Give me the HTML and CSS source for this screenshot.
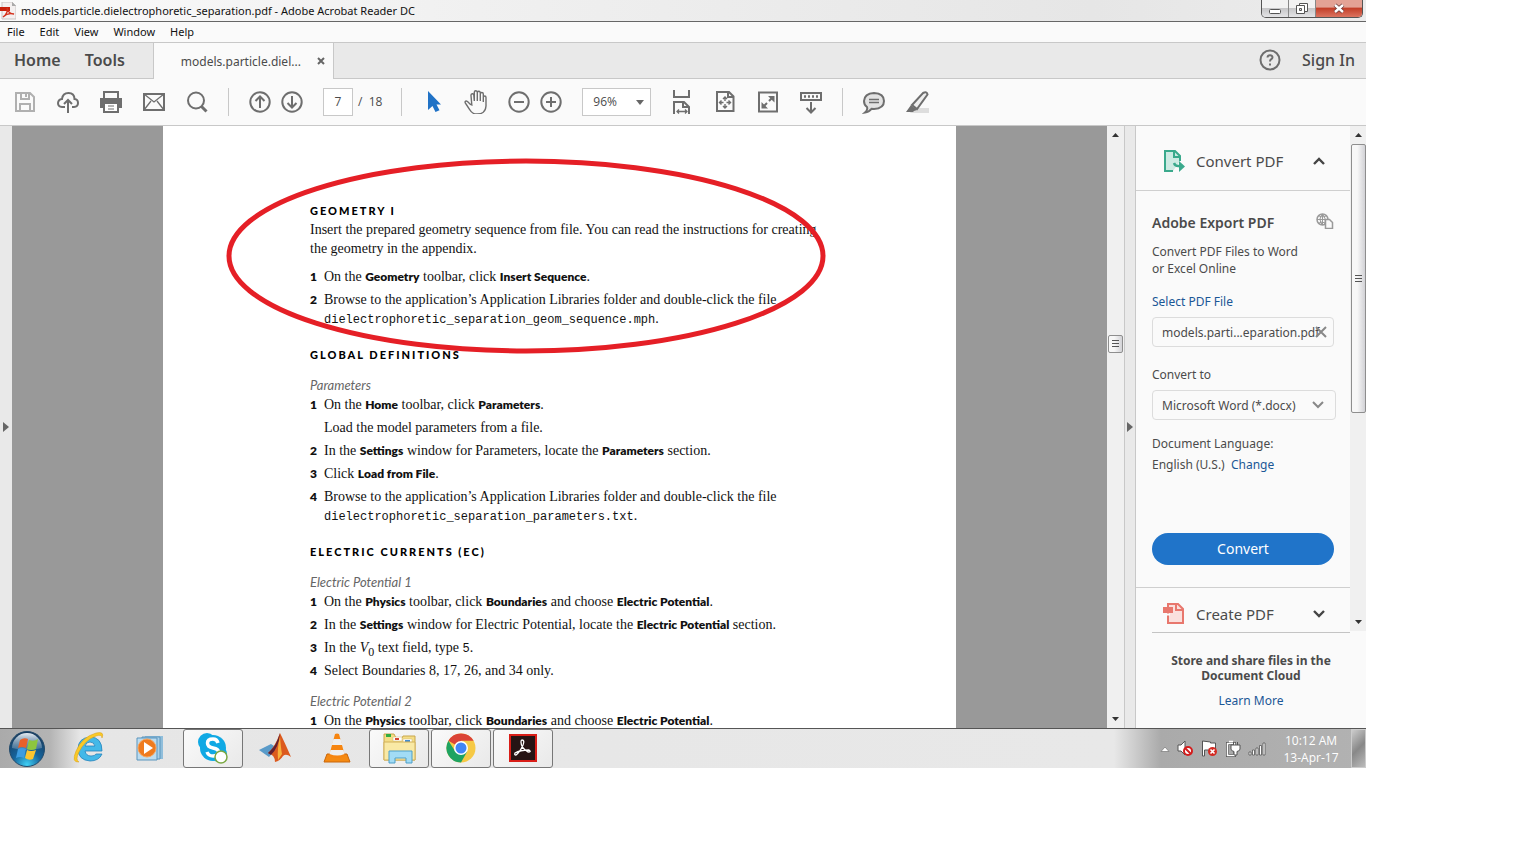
FILE: index.html
```html
<!DOCTYPE html>
<html lang="en">
<head>
<meta charset="utf-8">
<title>Adobe Acrobat Reader DC</title>
<link rel="stylesheet" href="styles.css">
</head>
<body>
<div class="desktop">
  <header class="titlebar">
    <svg class="app-icon" width="16" height="18" viewBox="0 0 16 18"><path d="M2 0h10l4 4v13H2z" fill="#f4f0f0" stroke="#c9c4c4"/><path d="M12 0v4h4z" fill="#aaa"/><path d="M0 5h10v4H0z" fill="#c9220d"/><path d="M3 15c4-3 5-6 4-9 1 4 3 6 7 6-4-1-8 0-11 3z" fill="none" stroke="#d4321e" stroke-width="1.3"/></svg>
    <span class="window-title">models.particle.dielectrophoretic_separation.pdf - Adobe Acrobat Reader DC</span>
    <div class="window-buttons">
      <button class="win-btn" aria-label="Minimize"><svg width="14" height="12"><rect x="1.500" y="6.500" width="11" height="4" rx="1" fill="#fff" stroke="#555"/></svg></button>
      <button class="win-btn" aria-label="Restore"><svg width="14" height="12"><path d="M4.500.5h8v8h-8z" fill="#fff" stroke="#555"/><path d="M1.500 2.500h8v8h-8z" fill="#fff" stroke="#555"/><path d="M4.500 5.500h2v2h-2z" fill="#ddd" stroke="#555"/></svg></button>
      <button class="win-btn win-close" aria-label="Close"><svg width="14" height="12" viewBox="0 0 14 12"><path d="M3 2l8 7M11 2L3 9" stroke="#6a3a3a" stroke-width="4"/><path d="M3 2l8 7M11 2L3 9" stroke="#fff" stroke-width="2.400"/></svg></button>
    </div>
  </header>
  <nav class="menubar">
    <button>File</button><button>Edit</button><button>View</button><button>Window</button><button>Help</button>
  </nav>
  <div class="tabbar">
    <button class="main-tab">Home</button>
    <button class="main-tab">Tools</button>
    <div class="doc-tab"><span>models.particle.diel...</span><button class="tab-close" aria-label="Close tab"><svg width="8" height="8"><path d="M1 1l6 6M7 1L1 7" stroke="#666" stroke-width="2"/></svg></button></div>
    <div class="account">
      <button class="icon-btn" aria-label="Help"><svg viewBox="0 0 24 24"><circle cx="12" cy="12" r="9.500"/><path d="M9.500 9.500q.2-2.300 2.500-2.300t2.500 2q0 1.300-1.500 2.200-1 .6-1 2"/><path d="M12 15.500v2"/></svg></button>
      <button class="sign-in">Sign In</button>
    </div>
  </div>
  <div class="toolbar">
    <button class="icon-btn dim" aria-label="Save"><svg viewBox="0 0 24 24"><path d="M3 3h14l4 4v14H3zM8 3v6h8V3M7 21v-7h10v7"/><path d="M13 4v3"/></svg></button>
    <button class="icon-btn" aria-label="Upload"><svg viewBox="0 0 24 24"><path d="M9 17H6q-4-.3-4-4 .3-3.500 4-4 .7-6 6.500-6T18.500 9q3.500.3 3.500 4 0 3.700-4 4h-2"/><path d="M12 23V10M8 14l4-4 4 4"/></svg></button>
    <button class="icon-btn" aria-label="Print"><svg viewBox="0 0 24 24"><path d="M5 8V2h14v6"/><path d="M1 8h22v10h-4v-4H5v4H1z" fill="#6e6e6e" stroke="none"/><path d="M5 13v9h14v-9z" fill="#fff"/><path d="M9 16h6M9 19h6" stroke-width="1"/></svg></button>
    <button class="icon-btn" aria-label="Email"><svg viewBox="0 0 24 24"><path d="M2 4h20v16H2z"/><path d="M2 4l10 8 10-8M2 20l7-9M22 20l-7-9" stroke-width="1.300"/></svg></button>
    <button class="icon-btn" aria-label="Search"><svg viewBox="0 0 24 24"><circle cx="11" cy="10.500" r="8"/><path d="M16.500 16.500l5 5" stroke-width="3"/></svg></button>
    <span class="divider"></span>
    <div class="pair">
      <button class="icon-btn" aria-label="Previous page"><svg viewBox="0 0 24 24"><circle cx="12" cy="12" r="9.700"/><path d="M12 18V7M7.500 11L12 6.500l4.500 4.500"/></svg></button>
      <button class="icon-btn" aria-label="Next page"><svg viewBox="0 0 24 24"><circle cx="12" cy="12" r="9.700"/><path d="M12 6v11M7.500 13l4.500 4.500 4.500-4.500"/></svg></button>
    </div>
    <div class="page-no"><input id="page" value="7" aria-label="Page"><label for="page">/&nbsp; 18</label></div>
    <span class="divider"></span>
    <button class="icon-btn" aria-label="Select"><svg viewBox="0 0 24 24"><path d="M7 1v19l4.500-4 3 6 4-1.800-3-5.700H20z" fill="#2072c6" stroke="none"/></svg></button>
    <button class="icon-btn" aria-label="Hand"><svg viewBox="0 0 24 24"><path d="M6.500 14.500L3.500 11.500Q2 10.500 1.300 11.500T2 14l4 6q2 4 7 4 8.500 0 9-8V7.500Q22 6 20.700 6T19.300 7.500V12 4Q19.300 2.500 17.800 2.500T16.300 4v7-8Q16.300 1.300 14.800 1.300T13.300 3v8V2Q13 .8 11.700.8T10.300 2.300V11L9.800 5Q9.500 3.500 8.200 3.700T7 5.500l.8 9.500z" stroke-width="1.400"/></svg></button>
    <div class="pair">
      <button class="icon-btn" aria-label="Zoom out"><svg viewBox="0 0 24 24"><circle cx="12" cy="12" r="9.700"/><path d="M7 12h10"/></svg></button>
      <button class="icon-btn" aria-label="Zoom in"><svg viewBox="0 0 24 24"><circle cx="12" cy="12" r="9.700"/><path d="M7 12h10M12 7v10"/></svg></button>
    </div>
    <div class="zoom"><select aria-label="Zoom level"><option>96%</option></select><svg width="8" height="5"><path d="M0 0h8L4 5z" fill="#666"/></svg></div>
    <button class="icon-btn" aria-label="Fit width"><svg viewBox="0 0 24 24"><path d="M4 0v7h15V0M4 24V12h10l5 5v7M13 12v5h6"/><path d="M7 21.500h10M9 19.500l-2 2 2 2M15 19.500l2 2-2 2" stroke-width="1.300"/></svg></button>
    <button class="icon-btn" aria-label="Fit page"><svg viewBox="0 0 24 24"><path d="M4 2h12l4.500 4.500V21H4zM15 2v5h5"/><path d="M12 7v4M12 14v4M7 12.500h3.500M13.500 12.500H17M10 9l2-2 2 2M10 16l2 2 2-2M8.500 10.500l-2 2 2 2M15.500 10.500l2 2-2 2" stroke-width="1.400"/></svg></button>
    <button class="icon-btn" aria-label="Full screen"><svg viewBox="0 0 24 24"><path d="M3 2.500h18v19H3z"/><path d="M13 11l4-4M7 17l4-4"/><path d="M12 6h6.500v6.500zM5.500 12v6.500H12z" fill="#6e6e6e" stroke="none"/></svg></button>
    <button class="icon-btn" aria-label="Read mode"><svg viewBox="0 0 24 24"><path d="M2 3h20v7H2z"/><path d="M5 6.500h14" stroke-dasharray="2 2" stroke-width="2.500"/><path d="M12 12v10M7.500 18l4.500 4.500 4.500-4.500"/></svg></button>
    <span class="divider"></span>
    <button class="icon-btn" aria-label="Comment"><svg viewBox="0 0 24 24"><path d="M12 3q10 .5 10 8t-10 8l-2.500-.2Q7 22 3 22.500 6 20 5 17q-3-2-3-6 .5-7.500 10-8z" fill="#e3e3e3"/><path d="M7 9.500h10M7 12.500h10" stroke-width="1.300"/></svg></button>
    <button class="icon-btn" aria-label="Highlight"><svg viewBox="0 0 24 24"><path d="M8 18h16v5H5z" fill="#ddd" stroke="none"/><path d="M7 15L18 3q4-2 4.500 1.500L12 19z" fill="#eee"/><path d="M6 15l6 5-3 1-1 1H1z" fill="#6e6e6e" stroke="none"/></svg></button>
  </div>

  <main class="workspace">
    <button class="rail rail-left" aria-label="Show navigation"><svg width="6" height="10"><path d="M0 0l6 5-6 5z" fill="#666"/></svg></button>
    <section class="viewer">
      <article class="page">
        <h2>GEOMETRY I</h2>
        <p>Insert the prepared geometry sequence from file. You can read the instructions for creating<br>the geometry in the appendix.</p>
        <ol class="spaced">
          <li>On the <b>Geometry</b> toolbar, click <b>Insert Sequence</b>.</li>
          <li>Browse to the application’s Application Libraries folder and double-click the file<br><code>dielectrophoretic_separation_geom_sequence.mph</code>.</li>
        </ol>
        <h2>GLOBAL DEFINITIONS</h2>
        <h3>Parameters</h3>
        <ol>
          <li>On the <b>Home</b> toolbar, click <b>Parameters</b>.<div class="note">Load the model parameters from a file.</div></li>
          <li>In the <b>Settings</b> window for Parameters, locate the <b>Parameters</b> section.</li>
          <li>Click <b>Load from File</b>.</li>
          <li>Browse to the application’s Application Libraries folder and double-click the file<br><code>dielectrophoretic_separation_parameters.txt</code>.</li>
        </ol>
        <h2>ELECTRIC CURRENTS (EC)</h2>
        <h3>Electric Potential 1</h3>
        <ol>
          <li>On the <b>Physics</b> toolbar, click <b>Boundaries</b> and choose <b>Electric Potential</b>.</li>
          <li>In the <b>Settings</b> window for Electric Potential, locate the <b>Electric Potential</b> section.</li>
          <li>In the <i>V</i><sub>0</sub> text field, type <code>5</code>.</li>
          <li>Select Boundaries 8, 17, 26, and 34 only.</li>
        </ol>
        <h3>Electric Potential 2</h3>
        <ol>
          <li>On the <b>Physics</b> toolbar, click <b>Boundaries</b> and choose <b>Electric Potential</b>.</li>
        </ol>
        <svg class="annotation" width="600" height="198"><ellipse cx="300" cy="99" rx="297" ry="95" fill="none" stroke="#e51f26" stroke-width="5"/></svg>
      </article>
    </section>
    <div class="scrollbar doc-scroll">
      <svg width="7" height="4"><path d="M0 4l3.500-4L7 4z" fill="#333"/></svg>
      <span class="thumb"><i></i></span>
      <svg width="7" height="4"><path d="M0 0l3.500 4L7 0z" fill="#333"/></svg>
    </div>
    <button class="rail rail-right" aria-label="Hide tools"><svg width="6" height="10"><path d="M0 0l6 5-6 5z" fill="#666"/></svg></button>
    <aside class="side">
      <div class="side-main">
        <div class="tools">
          <button class="tool-head">
            <svg width="22" height="24" viewBox="0 0 22 24"><path d="M10 22H2V2h10l5 5v5" fill="#cdeae3" stroke="#3aa98c" stroke-width="2"/><path d="M11 2v6h6" fill="none" stroke="#3aa98c" stroke-width="2"/><path d="M11 14q1 3 4 3h5" fill="none" stroke="#3aa98c" stroke-width="2.400"/><path d="M16 12l6 5.500-6 5.500z" fill="#3aa98c"/></svg>
            <span>Convert PDF</span>
            <svg width="12" height="8"><path d="M1 7l5-5 5 5" fill="none" stroke="#444" stroke-width="2.400"/></svg>
          </button>
          <div class="export">
            <div class="export-title"><h4>Adobe Export PDF</h4>
              <svg width="18" height="16" viewBox="0 0 18 16" fill="none" stroke="#999"><circle cx="6.500" cy="6.500" r="5.500" stroke-width="1.500"/><path d="M1 6.500h11M6.500 1v11M3 3q3.500 2 7 0M3 10q3-2 6 0M6.500 1q-5 5 0 11M6.500 1q4 4 2 11"/><path d="M9.500 6.500h4l3 3v6h-7z" fill="#fafafa" stroke-width="1.500"/></svg></div>
            <p class="blurb">Convert PDF Files to Word<br>or Excel Online</p>
            <a href="#" class="select-link">Select PDF File</a>
            <div class="field file"><input value="models.parti...eparation.pdf" aria-label="PDF file" readonly><button aria-label="Remove file"><svg width="12" height="12"><path d="M1 1l10 10M11 1L1 11" stroke="#888" stroke-width="2"/></svg></button></div>
            <label class="to-label" for="format">Convert to</label>
            <div class="field format"><select id="format"><option>Microsoft Word (*.docx)</option></select><svg width="12" height="8"><path d="M1 1l5 5 5-5" fill="none" stroke="#888" stroke-width="2"/></svg></div>
            <p class="language">Document Language:<br>English (U.S.)&nbsp; <a href="#">Change</a></p>
            <button class="convert">Convert</button>
          </div>
          <button class="tool-head create">
            <svg width="22" height="24" viewBox="0 0 22 24"><path d="M5 2h10l5 5v14H5z" fill="#fae0dd" stroke="#e8776d" stroke-width="2"/><path d="M13 2v6h7" fill="none" stroke="#e8776d" stroke-width="2"/><path d="M0 11h10V5H0z" fill="#e8776d"/><path d="M3 12.500h4" stroke="#fafafa" stroke-width="2"/></svg>
            <span>Create PDF</span>
            <svg width="12" height="8"><path d="M1 1l5 5 5-5" fill="none" stroke="#444" stroke-width="2.400"/></svg>
          </button>
        </div>
        <div class="scrollbar side-scroll">
          <svg width="7" height="4"><path d="M0 4l3.500-4L7 4z" fill="#333"/></svg>
          <span class="thumb"><i></i></span>
          <svg width="7" height="4"><path d="M0 0l3.500 4L7 0z" fill="#333"/></svg>
        </div>
      </div>
      <footer class="cloud"><strong>Store and share files in the<br>Document Cloud</strong><a href="#">Learn More</a></footer>
    </aside>
  </main>

  <footer class="taskbar">
    <button class="start" aria-label="Start"><svg width="38" height="38" viewBox="0 0 38 38"><defs><radialGradient id="orb" cx=".5" cy=".95" r=".9"><stop offset="0" stop-color="#3fd0f5"/><stop offset=".45" stop-color="#16649c"/><stop offset="1" stop-color="#173b5e"/></radialGradient><linearGradient id="gloss" x2="0" y2="1"><stop offset="0" stop-color="#e6edf3"/><stop offset="1" stop-color="#7d9db8" stop-opacity=".4"/></linearGradient></defs><circle cx="19" cy="19" r="17.500" fill="url(#orb)" stroke="#234b6c"/><path d="M4 18A15 15 0 0 1 34 18Q19 22 4 18z" fill="url(#gloss)"/><path d="M12 10q4-3 8-1l-2 9q-4-2-8 0z" fill="#e8612a"/><path d="M21 10q5 2 9-1l-2 10q-5 2-9 0z" fill="#8dc63f"/><path d="M10 19q4-2 8 0l-2 9q-4-2-8 0z" fill="#3c9ce0"/><path d="M19 20q4 2 9 0l-3 9q-4 2-8-1z" fill="#fbc530"/></svg></button>
    <button class="task" aria-label="Internet Explorer"><svg width="34" height="34" viewBox="0 0 34 34"><path d="M30 20H13q1 5 6 5 4 0 5-2h6q-3 7-12 7Q6 29 6 18T18 6q12 0 12 14zM13 15h10q-1-4-5-4t-5 4z" fill="#43b8e8" stroke="#2383bd" stroke-width=".8"/><path d="M7 31q-8 1-3-11Q10 6 24 2q9-2 6 5 0-4-6-2Q13 9 7 21q-4 8 0 10z" fill="#f9c927" stroke="#d99d13" stroke-width=".5"/></svg></button>
    <button class="task" aria-label="Media Player"><svg width="34" height="34" viewBox="0 0 34 34"><path d="M11 5h18v23H11z" fill="#90bedb"/><path d="M8 6h18v22H8z" fill="#a8d0ea" stroke="#5b95bd"/><path d="M3 7h20v22H3z" fill="#bcdcf0" stroke="#5b95bd"/><circle cx="13" cy="17" r="9" fill="#ef7b1f" stroke="#f7a45c"/><path d="M10 11v12l9-6z" fill="#fff"/></svg></button>
    <button class="task open" aria-label="Skype"><svg width="34" height="34" viewBox="0 0 34 34"><circle cx="11" cy="11" r="9" fill="#10a9e4"/><circle cx="23" cy="23" r="8" fill="#10a9e4"/><circle cx="17" cy="17" r="13" fill="#10a9e4"/><path d="M22 12q-1-4-5-4-5.500 0-5.500 4t5.500 5 5.500 4q0 4-5.500 4-4.500 0-6-4" fill="none" stroke="#fff" stroke-width="3.500"/><circle cx="25" cy="26" r="6" fill="#fff" stroke="#7aa842" stroke-width="1.500"/></svg></button>
    <button class="task" aria-label="MATLAB"><svg width="34" height="34" viewBox="0 0 34 34"><path d="M1 19l12-6 6 4-8 9z" fill="#5a9bc9"/><path d="M10 22Q17 16 22 2q5 10 11 24-5-4-8-1-3 5-8 6 0-7-7-9z" fill="#dc5a1e"/><path d="M22 2q-1 14-9 22l-3-2 3-3Q18 15 22 2z" fill="#622033"/><path d="M22 6q1 12 2 17l-4 6q-1-12 2-23z" fill="#f8b13d"/></svg></button>
    <button class="task" aria-label="VLC"><svg width="34" height="34" viewBox="0 0 34 34"><path d="M7 23h20l3 8H4z" fill="#f58a12" stroke="#c9660a"/><path d="M15 3q2-1 4 0l6 22q-8 4-16 0z" fill="#f68510"/><path d="M13.500 8h7l2 6h-11zM10.500 19h13l1 4q-7 3-15 0z" fill="#eee"/></svg></button>
    <button class="task open" aria-label="Explorer"><svg width="36" height="34" viewBox="0 0 36 34"><path d="M3 3h10l2 4h6l1-2h12v24H3z" fill="#f4dd86" stroke="#c8a64c"/><path d="M12 6h9v4h-9zM22 8h9v4h-9z" fill="#fff" stroke="#ccb770" stroke-width=".5"/><path d="M5 3h5v3H5z" fill="#30ad42"/><path d="M14 7h4v2h-4z" fill="#d64735"/><path d="M24 9h5v2h-5z" fill="#438dd0"/><path d="M3 11h31v18H3z" fill="#f9e9a5" stroke="#d2b15a"/><path d="M8 20h23v12h-6v-5H14v5H8z" fill="#a2dcf5" stroke="#4c9fc9"/></svg></button>
    <button class="task open" aria-label="Chrome"><svg width="34" height="34" viewBox="0 0 34 34"><circle cx="17" cy="17" r="14.500" fill="#f6c945"/><path d="M17 17L4.400 9.750A14.500 14.500 0 0 1 29.600 9.750H17z" fill="#db4437"/><path d="M4.400 9.750A14.500 14.500 0 0 0 17 31.500l6.200-11L17 17l-6 3z" fill="#1ea362"/><circle cx="17" cy="17" r="7" fill="#fff"/><circle cx="17" cy="17" r="5.500" fill="#4285f4"/></svg></button>
    <button class="task open" aria-label="Acrobat Reader"><svg width="30" height="30" viewBox="0 0 30 30"><path d="M2 2h26v26H2z" fill="#261414" stroke="#d91e18" stroke-width="2"/><path d="M14 7q3 0 1 5-3 7-7 10-2 0-1-2 5-3 14-3 3 2-1 2-7-4-7-10 0-2 1-2z" fill="none" stroke="#fff" stroke-width="1.300"/></svg></button>
    <div class="tray">
      <svg width="10" height="6"><path d="M1 5.500L5 1l4 4.500z" fill="#fff" stroke="#777" stroke-width=".7"/></svg>
      <svg width="17" height="17" viewBox="0 0 17 17"><path d="M1 5h3l4-4v14l-4-4H1z" fill="#fff" stroke="#555"/><circle cx="11" cy="11" r="4" fill="#fff" stroke="#d31d1d" stroke-width="2"/><path d="M8 8l6 6" stroke="#d31d1d" stroke-width="2"/></svg>
      <svg width="17" height="17" viewBox="0 0 17 17"><path d="M1.500 1v15h2v-6h6V9h5V3h-5V2z" fill="#fff" stroke="#555"/><circle cx="11.500" cy="11.500" r="4.500" fill="#d32a22"/><path d="M9.500 9.500l4 4M13.500 9.500l-4 4" stroke="#fff" stroke-width="1.600"/></svg>
      <svg width="16" height="17" viewBox="0 0 16 17"><path d="M2.500 3.500h7v12h-7z" fill="#aaa" stroke="#555" stroke-width="3"/><path d="M2.500 3.500h7v12h-7zM4 1.500h4" fill="none" stroke="#fff" stroke-width="1.500"/><path d="M6 5h9v4q0 2-3 2.500V15H9v-3.500Q6 11 6 9zM8.500 5V2M12.500 5V2" fill="#fff" stroke="#555"/></svg>
      <svg width="18" height="14" viewBox="0 0 18 14" fill="#fff" stroke="#555" stroke-width=".8"><path d="M1 10h2v3H1zM4.500 8h2v5h-2zM8 6h2v7H8zM11.500 3.500h2V13h-2zM15 1h2v12h-2z"/></svg>
      <time>10:12 AM<br>13-Apr-17</time>
      <button class="peek" aria-label="Show desktop"></button>
    </div>
  </footer>
</div>
</body>
</html>
```
FILE: styles.css
```css
* { box-sizing: border-box; }
body { margin: 0; height: 100vh; padding: 0 163px 92px 0; background: #fff; overflow: hidden; font-family: "Open Sans", sans-serif; font-size: 12px; color: #4b4b4b; }
button { margin: 0; padding: 0; border: 0; background: none; font: inherit; color: inherit; }
input, select { font: inherit; color: inherit; appearance: none; margin: 0; }
svg { display: block; flex: none; }
a { color: #1b5796; text-decoration: none; }
.desktop { height: 100%; display: flex; flex-direction: column; background: #fafafa; }

.titlebar { flex: none; height: 22px; display: flex; align-items: center; border-bottom: 1px solid #666; background: linear-gradient(90deg, #fafafa 0, #f0f0f0 35%, #e6e6e6 80%, #ececec); color: #111; }
.window-title { padding-left: 5px; flex: 1; white-space: nowrap; font-family: "Noto Sans", sans-serif; font-size: 11px; }
.window-buttons { align-self: flex-start; display: flex; margin-right: 3px; border: 1px solid #555; border-top: 0; border-radius: 0 0 5px 5px; overflow: hidden; }
.win-btn { width: 27px; height: 17px; display: grid; place-items: center; border-right: 1px solid #888; background: linear-gradient(#f2f2f2 0 45%, #c6c6c8 50%, #e4e4e6); }
.win-close { width: 46px; border: 0; background: linear-gradient(#e3a295 0 40%, #c3402a 50%, #dc7460); }

.menubar { flex: none; height: 21px; display: flex; align-items: center; gap: 15px; padding: 0 0 2px 7px; border-bottom: 1px solid #c8c8c8; color: #111; font-family: "Noto Sans", sans-serif; font-size: 11px; }
.tabbar { flex: none; height: 36px; display: flex; align-items: stretch; border-bottom: 1px solid #c8c8c8; background: #e9e9e9; }
.main-tab { padding-left: 14px; padding-bottom: 1px; font: 600 16px "Noto Sans", sans-serif; }
.main-tab + .main-tab { padding: 0 28px 1px 24px; }
.doc-tab { width: 181px; margin-bottom: -1px; padding-left: 27px; display: flex; align-items: center; gap: 16px; background: #fafafa; border: solid #c8c8c8; border-width: 0 1px; font-family: "Noto Sans", sans-serif; white-space: nowrap; }
.account { margin-left: auto; display: flex; align-items: center; gap: 20px; padding: 0 11px 1px 0; }
.sign-in { font: 500 16px "Noto Sans", sans-serif; }

.toolbar { flex: none; height: 47px; display: flex; align-items: center; gap: 19px; padding: 0 0 1px 13px; border-bottom: 1px solid #c8c8c8; }
.icon-btn { width: 24px; height: 24px; flex: none; }
.icon-btn svg { width: 24px; height: 24px; fill: none; stroke: #6e6e6e; stroke-width: 2; }
.dim svg { stroke: #b0b0b0; }
.divider { width: 1px; height: 28px; background: #c8c8c8; }
.pair { display: flex; gap: 8px; }
.page-no { display: flex; align-items: center; gap: 5px; }
.page-no input { width: 30px; height: 28px; padding: 0; border: 1px solid #c8c8c8; text-align: center; background: #fff; }
.zoom { position: relative; }
.zoom select { width: 69px; height: 28px; padding: 0 10px; border: 1px solid #c8c8c8; border-radius: 0; background: #fff; }
.zoom svg { position: absolute; right: 7px; top: 12px; }

.workspace { flex: 1; min-height: 0; display: flex; }
.rail { width: 12px; flex: none; display: grid; place-items: center; background: #e9e9e9; }
.rail-right { border: solid #c8c8c8; border-width: 0 1px; }
.viewer { flex: 1; min-width: 0; overflow: hidden; display: flex; justify-content: center; background: #999; }
.page { position: relative; flex: 0 1 793px; min-height: 100%; padding: 75px 0 0 147px; background: #fff; color: #111; font: 14px/19px "Liberation Serif", serif; white-space: nowrap; }
.page h2 { margin: 17px 0 0; font: 900 11px/19px Lato, sans-serif; letter-spacing: 2px; color: #000; }
.page h2:first-child { margin-top: 0; }
.page h3 { margin: 12px 0 0; font: italic 13px/19px Lato, sans-serif; color: #666; }
.page p { margin: 0; }
.page b { font: 800 12px/12px Lato, sans-serif; }
.page code { font: 12px/12px "Liberation Mono", monospace; }
.page sub { font-size: 12px; line-height: 0; vertical-align: -4px; }
.page ol { margin: 0; padding: 0; list-style: none; counter-reset: step; display: grid; gap: 4px; }
.page ol.spaced { margin-top: 9px; }
.page li { padding-left: 14px; counter-increment: step; }
.page li::before { content: counter(step); float: left; width: 14px; margin-left: -14px; font: 800 12px/19px Lato, sans-serif; }
.note { margin-top: 4px; }
.annotation { position: absolute; left: 63px; top: 31px; }

.scrollbar { flex: none; background: #f0f0f0; padding: 7px 0; }
.thumb { display: grid; place-items: center; border: 1px solid #8e8e8e; border-radius: 2px; background: linear-gradient(90deg, #f7f7f7 0 40%, #d2d2d6); }
.thumb i { width: 7px; height: 8px; background: repeating-linear-gradient(#555 0 1px, transparent 1px 3px); }
.doc-scroll { width: 17px; display: grid; grid-template-rows: 4px 197fr 18px 362fr 4px; justify-items: center; }
.doc-scroll .thumb { width: 15px; grid-row: 3; }
.doc-scroll svg:last-child { grid-row: 5; }

.side { width: 230px; flex: none; display: flex; flex-direction: column; font-family: "Noto Sans", sans-serif; }
.side-main { flex: 1; min-height: 0; display: flex; }
.tools { flex: 1; overflow: hidden; }
.tool-head { width: 100%; height: 65px; padding: 5px 25px 0 27px; display: flex; align-items: center; gap: 11px; border-bottom: 1px solid #cfcfcf; font-size: 15px; }
.tool-head span { flex: 1; text-align: left; }
.export { padding: 22px 16px; height: 397px; border-bottom: 1px solid #cfcfcf; display: flex; flex-direction: column; align-items: flex-start; }
.export-title { width: 182px; display: flex; justify-content: space-between; }
.export h4 { margin: 0; font: 600 14px/20px "Noto Sans", sans-serif; }
.export p { margin: 0; }
.blurb { padding-top: 10px; line-height: 17px; }
.select-link { margin-top: 16px; line-height: 17px; }
.field { position: relative; }
.field input, .field select { width: 182px; height: 30px; padding: 0 9px; border: 1px solid #dcdcdc; border-radius: 4px; background: #fafafa; }
.field input { padding-right: 0; }
.field.file { margin-top: 7px; }
.field.file button { position: absolute; right: 7px; top: 9px; }
.field.format { margin-top: 6px; }
.field select { width: 184px; }
.field.format svg { position: absolute; right: 12px; top: 11px; }
.to-label { margin-top: 19px; line-height: 18px; }
.language { padding-top: 13px; line-height: 21px; }
.convert { width: 182px; height: 32px; margin-top: auto; padding-bottom: 2px; border-radius: 16px; background: #2074c9; color: #fff; font-size: 14px; }
.tool-head.create { height: 50px; padding-top: 1px; border: 0; }
.side-scroll { width: 16px; display: flex; flex-direction: column; align-items: center; }
.side-scroll .thumb { width: 15px; flex: 0 0 269px; margin: 7px 0 auto; }
.cloud { flex: none; height: 97px; display: flex; flex-direction: column; align-items: center; gap: 10px; padding-top: 22px; text-align: center; line-height: 15px; position: relative; }
.cloud::before { content: ""; position: absolute; left: 16px; right: 16px; top: 1px; border-top: 1px solid #c4c4c4; }

.taskbar { flex: none; height: 40px; display: flex; border-top: 1px solid #555; background: linear-gradient(90deg, #aaa 0, #b4b4b4 50px, #e6e6e6 80px, #e8e8e8 calc(100% - 252px), #aaa calc(100% - 205px), #b2b2b2); }
.start { width: 59px; padding-left: 8px; }
.task { width: 60px; margin-right: 2px; padding-bottom: 2px; display: grid; place-items: center; border-radius: 3px; }
.task.open { border: 1px solid #777; background: linear-gradient(135deg, #fafafa, #e9e9e9); }
.tray { margin-left: auto; display: flex; align-items: center; gap: 7px; color: #fff; }
.tray time { width: 76px; text-align: center; line-height: 17px; }
.peek { width: 15px; height: 100%; margin-left: -5px; border: 1px solid #ccc; background: linear-gradient(135deg, #ccc, #888 50%, #bbb); }
```
